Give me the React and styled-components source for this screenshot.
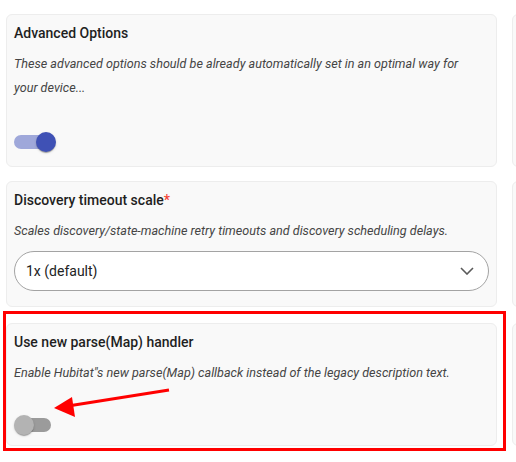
import styled, { createGlobalStyle } from "styled-components"

const Global = createGlobalStyle`
  html, body {
    margin: 0;
    padding: 0;
    background: #ffffff;
    overflow: hidden;
  }
  body {
    font-family: Roboto, "Liberation Sans", sans-serif;
    color: #212121;
  }
`

const Page = styled.main`
  width: 516px;
  height: 462px;
  overflow: hidden;
  padding: 14px 0 0 6px;
  box-sizing: border-box;
`

const Grid = styled.div`
  display: grid;
  grid-template-columns: 491px 491px;
  column-gap: 15px;
  row-gap: 14px;
`

const Card = styled.section`
  background: #f9f9f9;
  border: 1px solid #ededed;
  border-radius: 6px;
  padding: 8px 7px ${p => p.$bottom || 14}px 7px;
  margin-top: ${p => p.$top || 0}px;
  box-sizing: border-box;
  display: flex;
  flex-direction: column;
`

const Titulo = styled.h3`
  margin: 0;
  font-size: 14px;
  line-height: 20px;
  font-weight: 500;
  color: #1f1f1f;
`

const Asterisco = styled.span`
  color: #f44336;
`

const Descricao = styled.p`
  margin: 9px 0 0 0;
  padding-right: 12px;
  font-size: 12.6px;
  line-height: 24px;
  font-style: italic;
  color: #454545;
`

const SwitchBox = styled.div`
  position: relative;
  width: 42px;
  height: 20px;
  margin-top: ${p => p.$gap}px;
`

const Trilho = styled.div`
  position: absolute;
  left: ${p => (p.$on ? 0 : 3)}px;
  top: 3px;
  width: 34px;
  height: 14px;
  border-radius: 7px;
  background: ${p => (p.$on ? "#9fa8da" : "#9b9b9b")};
`

const Bolinha = styled.div`
  position: absolute;
  top: 0;
  left: ${p => (p.$on ? 22 : 0)}px;
  width: 20px;
  height: 20px;
  border-radius: 50%;
  background: ${p => (p.$on ? "#3f51b5" : "#b3b3b3")};
  box-shadow: 0 2px 1px -1px rgba(0,0,0,0.2), 0 1px 1px 0 rgba(0,0,0,0.14), 0 1px 3px 0 rgba(0,0,0,0.12);
`

const Select = styled.div`
  margin-top: 8px;
  height: 40px;
  border: 1px solid #a3a3a3;
  border-radius: 20px;
  background: #ffffff;
  box-sizing: border-box;
  display: flex;
  align-items: center;
  justify-content: space-between;
  padding: 0 14px 0 11px;
  font-size: 14px;
  color: #222;
`

const Destaque = styled.div`
  position: relative;
`

const Moldura = styled.div`
  position: absolute;
  left: -3px;
  top: -12px;
  right: -9px;
  bottom: -5px;
  border: 3px solid #ff0000;
  pointer-events: none;
`

const Seta = styled.svg`
  position: absolute;
  left: 40px;
  top: 60px;
  overflow: visible;
`

function Switch({ on, gap }) {
  return (
    <SwitchBox $gap={gap}>
      <Trilho $on={on} />
      <Bolinha $on={on} />
    </SwitchBox>
  )
}

function Chevron() {
  return (
    <svg width="14" height="8" viewBox="0 0 14 8">
      <path d="M1 1 L7 7 L13 1" fill="none" stroke="#5a5a5a" strokeWidth="1.6" />
    </svg>
  )
}

export default function App() {
  return (
    <Page>
      <Global />
      <Grid>
        <Card>
          <Titulo>Advanced Options</Titulo>
          <Descricao>These advanced options should be already automatically set in an optimal way for your device...</Descricao>
          <Switch on gap={32} />
        </Card>
        <Card />

        <Card $bottom={15}>
          <Titulo>Discovery timeout scale<Asterisco>*</Asterisco></Titulo>
          <Descricao>Scales discovery/state-machine retry timeouts and discovery scheduling delays.</Descricao>
          <Select>
            <span>1x (default)</span>
            <Chevron />
          </Select>
        </Card>
        <Card />

        <Destaque style={{ marginTop: 2 }}>
          <Card $bottom={10}>
            <Titulo>Use new parse(Map) handler</Titulo>
            <Descricao>Enable Hubitat"s new parse(Map) callback instead of the legacy description text.</Descricao>
            <Switch gap={30} />
          </Card>
          <Moldura />
          <Seta width="130" height="40" viewBox="0 0 130 40">
            <line x1="123" y1="7" x2="22" y2="23" stroke="#ff0000" strokeWidth="3" />
            <polygon points="8,25 26,14 29,34" fill="#ff0000" />
          </Seta>
        </Destaque>
        <Card style={{ marginTop: 2 }} />
      </Grid>
    </Page>
  )
}
